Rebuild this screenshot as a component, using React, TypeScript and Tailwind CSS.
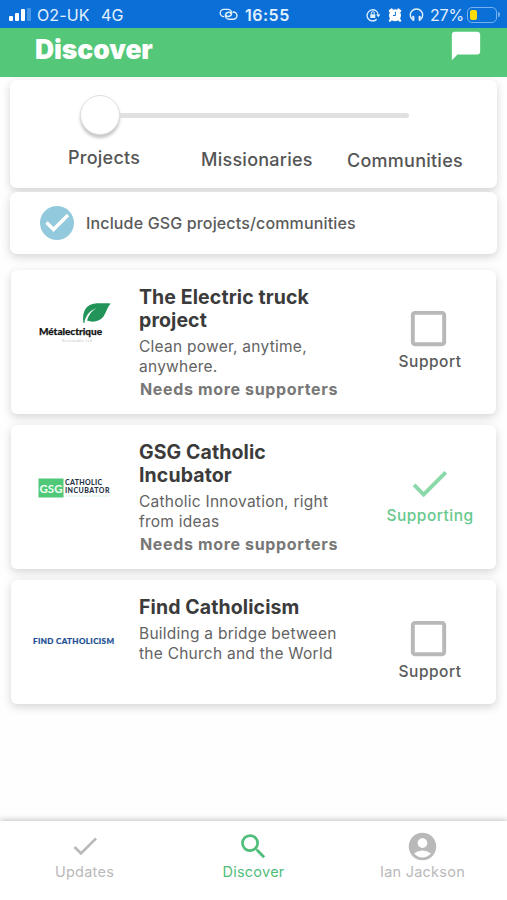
import { ReactNode, useState } from "react";
import { MdAccountCircle, MdChatBubble, MdCheck, MdCheckBoxOutlineBlank, MdSearch } from "react-icons/md";

const StatusBar = () => {
    return (
        <div className="flex h-7 shrink-0 items-center bg-[#0b6fd8] pt-px text-[#e3f1ff]">
            <div className="ml-[9px] flex h-[13px] items-end gap-[2px]">
                <div className="h-[5px] w-[4px] rounded-[1px] bg-white"></div>
                <div className="h-[8px] w-[4px] rounded-[1px] bg-white"></div>
                <div className="h-[12px] w-[4px] rounded-[1px] bg-white"></div>
                <div className="h-[13px] w-[4px] rounded-[1px] bg-[#4796e6]"></div>
            </div>
            <span className="ml-[6px] w-[64px] text-[16px] tracking-[0.1px]">O2-UK</span>
            <span className="w-[118px] text-[16px] tracking-[0.1px]">4G</span>
            <svg width="19" height="13" viewBox="0 0 20 14" fill="none" stroke="currentColor" strokeWidth="1.5">
                <path d="M5.5 9.3H5A3.9 3.9 0 0 1 5 1.5h4.5a3.9 3.9 0 0 1 3.7 5.2c-.5 1.5-1.9 2.4-3.7 2.4-1.4 0-2.3-.8-2.3-1.9" />
                <path d="M14.5 4.3h.7a3.9 3.9 0 0 1 0 7.8h-4.7a3.9 3.9 0 0 1-3.7-5.2c.5-1.5 1.9-2.4 3.7-2.4 1.4 0 2.3.8 2.3 1.9" />
            </svg>
            <span className="ml-[7px] w-[121px] text-[16px] font-semibold tracking-[0.5px]">16:55</span>
            {/* rotation lock */}
            <svg width="15" height="14" viewBox="0 0 15 14" fill="none" stroke="currentColor" strokeWidth="1.3">
                <path d="M10.7 11.3A5.6 5.6 0 1 1 12.3 7" />
                <path d="M10.2 6.6h4.2l-2.1 2.7z" fill="currentColor" stroke="none" />
                <rect x="4.3" y="6.2" width="5" height="3.8" rx=".5" fill="currentColor" stroke="none" />
                <path d="M5.3 6.5V5.2a1.5 1.5 0 0 1 3 0v1.3" strokeWidth="1" />
            </svg>
            {/* alarm */}
            <svg className="ml-[7px]" width="14" height="14" viewBox="0 0 14 14">
                <circle cx="7" cy="7.2" r="6" fill="white" />
                <path d="M2 3 3.6 1.6M12 3 10.4 1.6M3 11.4l-1 1.2M11 11.4l1 1.2" stroke="white" strokeWidth="2.4" strokeLinecap="round" />
                <path d="M7.4 3.8v3.7H5" fill="none" stroke="#0b6fd8" strokeWidth="1" />
            </svg>
            {/* headphones */}
            <svg className="ml-[7px]" width="15" height="14" viewBox="0 0 15 14" fill="none" stroke="currentColor" strokeWidth="1.4">
                <path d="M3.2 11.3C.8 9 .8 5.3 2.7 3.2a6.4 6.4 0 0 1 9.6 0c1.9 2.1 1.9 5.8-.5 8.1" />
                <path d="M4.3 8.8v3.2M10.7 8.8v3.2" strokeWidth="2.2" strokeLinecap="round" />
            </svg>
            <span className="ml-[6px] w-[37px] text-[16px] tracking-[-0.2px]">27%</span>
            <div className="flex h-[16px] w-[30px] rounded-[5px] border border-[#75b1ed] p-[2px]">
                <div className="w-[7px] rounded-[2px] bg-[#ffdb0a]"></div>
            </div>
            <div className="ml-px h-[5px] w-[2px] rounded-r bg-[#75b1ed]"></div>
        </div>
    );
};

const MetalectriqueLogo = () => (
    <svg className="mt-[29px] ml-[22px]" width="86" height="50" viewBox="0 0 86 50">
        <path d="M50.4 24C48.6 11 54 4.8 64 4.3c5 0 9-.5 13.7.2-3.3 3.4-4.2 8.6-7.2 13-3.5 5-10.5 6.3-16.5 4.1 1.7-6 5-10 9.5-12.3-7 2-11 7.5-12.1 14.7z" fill="#22945a" />
        <text x="6" y="36" fontSize="9.5" fontWeight="900" fill="#161616" stroke="#161616" strokeWidth=".25" textLength="63" lengthAdjust="spacingAndGlyphs" fontFamily="Lato, sans-serif">Métalectrique</text>
        <text x="29" y="43" fontSize="4" fill="#c9c9c9" textLength="30" fontFamily="Lato, sans-serif">Renewable Ltd</text>
    </svg>
);

const IncubatorLogo = () => (
    <svg className="mt-[49px] ml-[22px]" width="86" height="28" viewBox="0 0 86 28">
        <rect x="5.5" y="4.5" width="25" height="19" fill="#4fc878" />
        <text x="6.5" y="18.5" fontSize="11.5" fontWeight="700" fill="#effff4" textLength="23" lengthAdjust="spacingAndGlyphs" fontFamily="Lato, sans-serif">GSG</text>
        <g fontFamily="Lato, sans-serif" fontSize="7" fontWeight="900" fill="#263246">
            <text x="32" y="11.3" textLength="37" lengthAdjust="spacing">CATHOLIC</text>
            <text x="32" y="18.8" textLength="44.5" lengthAdjust="spacing">INCUBATOR</text>
        </g>
        <path d="M32.5 22h43" stroke="#bfe8cf" strokeWidth=".8" strokeDasharray="2 .6" />
    </svg>
);

const FindLogo = () => (
    <svg className="mt-[50px] ml-[20px]" width="88" height="22" viewBox="0 0 88 22">
        <text x="2" y="13.5" fontSize="8" fontWeight="900" fill="#1c4f94" stroke="#1c4f94" strokeWidth=".2" textLength="81" lengthAdjust="spacing" fontFamily="Lato, sans-serif">FIND CATHOLICISM</text>
    </svg>
);

type ProjectProps = {
    logo: ReactNode;
    title: string;
    description: string;
    needsSupporters?: boolean;
    supporting?: boolean;
    className: string;
};

const ProjectCard = (props: ProjectProps) => {
    const [supporting, setSupporting] = useState(!!props.supporting);

    return (
        <div className={`mx-[11px] flex shrink-0 rounded-[6px] bg-white shadow-[0_3px_10px_rgba(0,0,0,0.17)] ${props.className}`}>
            <div className="w-32 shrink-0">{props.logo}</div>
            <div className="w-[210px] shrink-0 pt-[16px]">
                <h2 className="w-[205px] text-[19.5px] leading-[23px] font-bold tracking-[0.1px] text-[#3b3b3b]">{props.title}</h2>
                <p className="mt-[5px] w-[208px] text-[15.5px] leading-[19.5px] tracking-[0.25px] text-[#636363]">{props.description}</p>
                {props.needsSupporters && (
                    <p className="mt-[3px] ml-px text-[16px] leading-5 font-bold tracking-[0.65px] whitespace-nowrap text-[#777]">Needs more supporters</p>
                )}
            </div>
            <button className="ml-[22px] flex w-[117px] shrink-0 flex-col items-center self-start pt-[35px]" onClick={() => setSupporting(!supporting)}>
                {supporting ? (
                    <MdCheck size={47} />
                ) : (
                    <MdCheckBoxOutlineBlank size={47} className="-translate-x-px text-[#b8b8b8]" />
                )}
                {supporting ? (
                    <span className="-mt-px ml-px text-[15.5px] leading-5 font-medium tracking-[0.5px] text-[#67c98d]">Supporting</span>
                ) : (
                    <span className="ml-px text-[15.5px] leading-5 font-medium tracking-[0.5px] text-[#5a5a5a]">Support</span>
                )}
            </button>
        </div>
    );
};

const App = () => {
    return (
        <div className="flex h-[900px] w-[507px] flex-col overflow-hidden bg-[#fefefe] font-['Inter',sans-serif] [&_button]:text-[#8bd9aa]">
            <StatusBar />

            {/* header */}
            <div className="flex h-[49px] shrink-0 justify-between bg-[#54c878] pr-[24px] pl-[35px] text-white">
                <h1 className="mt-[5px] text-[26.5px] leading-8 font-black tracking-[-0.1px]">Discover</h1>
                <MdChatBubble size={34} className="mt-px" />
            </div>

            {/* filters */}
            <div className="mx-[10px] mt-[3px] h-[108px] shrink-0 rounded-[7px] bg-white pt-[14px] shadow-[0_3px_8px_rgba(0,0,0,0.17)]">
                <div className="ml-[70px] flex h-[42px] items-center">
                    <div className="size-10 rounded-full border border-[#dedede] bg-white shadow-[0_3px_3px_rgba(0,0,0,0.22)]"></div>
                    <div className="h-[5px] w-[289px] rounded-r-sm bg-[#e0e0e0]"></div>
                </div>
                <div className="flex items-start text-[18px] leading-5 font-medium tracking-[0.25px] text-[#555]">
                    <span className="ml-[58px] w-[133px] pt-[12px]">Projects</span>
                    <span className="w-[145px] pt-[14px]">Missionaries</span>
                    <span className="ml-px pt-[15px]">Communities</span>
                </div>
            </div>
            <div className="mx-[10px] mt-1 flex h-[62px] shrink-0 items-center rounded-[7px] bg-white shadow-[0_3px_10px_rgba(0,0,0,0.17)]">
                <div className="ml-[30px] flex size-[34px] items-center justify-center rounded-full bg-[#93c9dc]">
                    <svg width="34" height="34" viewBox="0 0 34 34" fill="none" stroke="white" strokeWidth="3.4">
                        <path d="M6.5 16.5l7 7L28 9" />
                    </svg>
                </div>
                <span className="ml-[12px] text-[16px] font-medium tracking-[0.15px] text-[#5a5a5a]">Include GSG projects/communities</span>
            </div>
            {/* end filters */}

            <div className="mt-[16px] flex flex-col gap-[11px]">
                <ProjectCard
                    className="h-[144px]"
                    logo={<MetalectriqueLogo />}
                    title="The Electric truck project"
                    description="Clean power, anytime, anywhere."
                    needsSupporters
                />
                <ProjectCard
                    className="h-[144px]"
                    logo={<IncubatorLogo />}
                    title="GSG Catholic Incubator"
                    description="Catholic Innovation, right from ideas"
                    needsSupporters
                    supporting
                />
                <ProjectCard
                    className="h-[124px]"
                    logo={<FindLogo />}
                    title="Find Catholicism"
                    description="Building a bridge between the Church and the World"
                />
            </div>

            {/* bottom navigation */}
            <nav className="mt-auto grid h-[79px] shrink-0 grid-cols-3 bg-white pt-[9px] text-[14.5px] leading-5 tracking-[0.25px] text-[#b9b9b9] shadow-[0_-1px_6px_rgba(0,0,0,0.25)]">
                <a className="flex flex-col items-center">
                    <MdCheck size={32} />
                    <span>Updates</span>
                </a>
                <a className="flex flex-col items-center text-[#50bd7b]">
                    <MdSearch size={33} />
                    <span className="-mt-px">Discover</span>
                </a>
                <a className="flex flex-col items-center">
                    <MdAccountCircle size={33} />
                    <span className="-mt-px">Ian Jackson</span>
                </a>
            </nav>
        </div>
    );
};

export default App;
